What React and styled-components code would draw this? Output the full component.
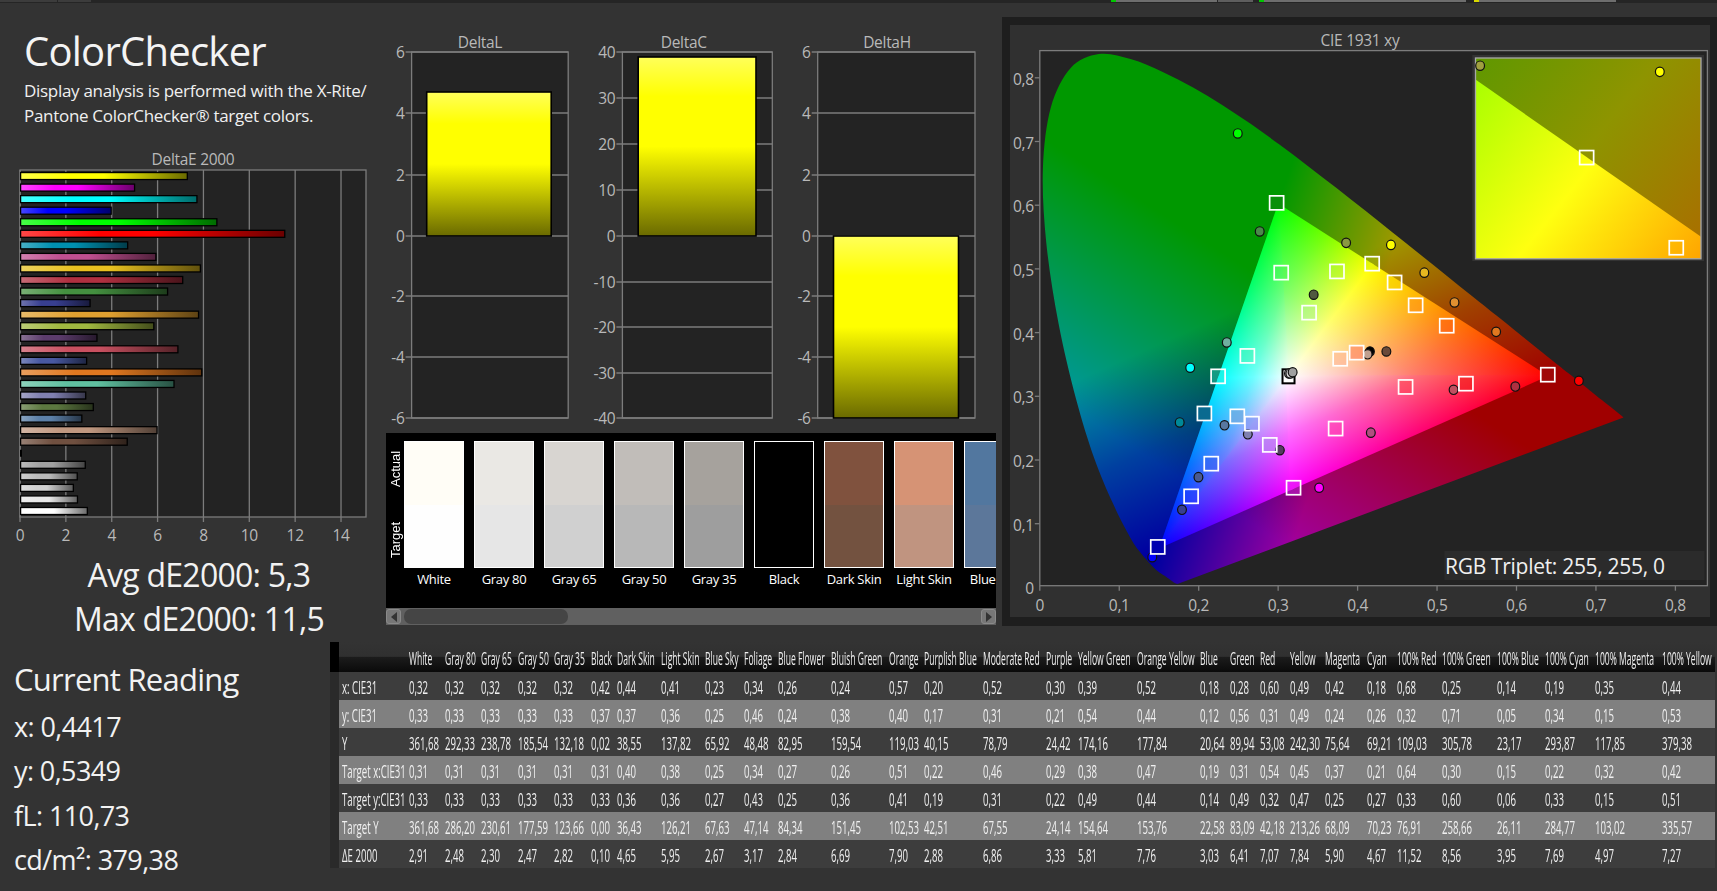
import React from 'react';
import styled, { createGlobalStyle } from 'styled-components';

const FONT = '"Open Sans", "Noto Sans", sans-serif';
const Global = createGlobalStyle`
  html, body { margin: 0; padding: 0; background: #333; }
  body { font-family: ${FONT}; }
`;

const Page = styled.div`
  width: 1717px; height: 891px; background: #333333; overflow: hidden;
  display: flex; flex-direction: column; color: #f2f2f2;
`;
const TopStrip = styled.div`
  height: 3px; background: #252525; display: flex; flex: none;
`;
const StripSeg = styled.div`
  height: 2px; width: ${p => p.$w}px; margin-left: ${p => p.$gap}px; background: ${p => p.$c}; flex: none;
`;
const TopRow = styled.div`
  display: flex; height: 637px; flex: none;
`;
const LeftCol = styled.div`
  width: 386px; flex: none; display: flex; flex-direction: column;
`;
const Title = styled.h1`
  margin: 23px 0 0 24px; font-size: 40px; font-weight: 400; line-height: 50px; letter-spacing: -0.75px; color: #f4f4f4;
`;
const Desc = styled.p`
  margin: 2px 0 20px 24px; font-size: 17px; line-height: 25px; letter-spacing: -0.3px; color: #f0f0f0; height: 50px; white-space: nowrap;
`;
const ChartSvg = styled.svg`
  display: block; flex: none;
`;
const Stats = styled.div`
  display: flex; flex-direction: column; align-items: flex-start;
`;
const Stat = styled.div`
  font-size: 32px; line-height: 44px; letter-spacing: -0.75px; color: #f2f2f2; white-space: nowrap; width: 398px; text-align: center;
`;
const MidCol = styled.div`
  width: 616px; flex: none; display: flex; flex-direction: column; padding-top: 25px;
`;
const DeltaRow = styled.div`
  display: flex; height: 405px; flex: none;
`;
const SwatchPanel = styled.div`
  width: 610px; height: 192px; display: flex; flex-direction: column; flex: none;
`;
const SwatchArea = styled.div`
  height: 175px; background: #000; display: flex; overflow: hidden; flex: none;
`;
const SideLabels = styled.div`
  width: 18px; flex: none; display: flex; flex-direction: column;
`;
const SideLabel = styled.div`
  height: 71px; display: flex; align-items: center; justify-content: center;
  writing-mode: vertical-rl; transform: rotate(180deg);
  font-size: 13px; font-weight: 400; color: #fff;
  font-family: "Liberation Sans", sans-serif;
`;
const Swatches = styled.div`
  display: flex; gap: 10px; padding-top: 8px;
`;
const SwatchItem = styled.div`
  width: 60px; flex: none; display: flex; flex-direction: column; align-items: center;
`;
const SwatchBox = styled.div`
  width: 60px; height: 127px; box-sizing: border-box; border: 1.5px solid #fff; display: flex; flex-direction: column; box-shadow: inset 0 0 0 1px rgba(0,0,0,.12);
`;
const SwatchHalf = styled.div`
  flex: 1; background: ${p => p.$c};
`;
const SwatchLabel = styled.div`
  font-size: 13px; line-height: 22px; color: #fff; white-space: nowrap; letter-spacing: -0.3px;
`;
const ScrollBar = styled.div`
  height: 17px; background: #606060; display: flex; align-items: center; justify-content: space-between; flex: none;
`;
const ScrollBtn = styled.div`
  width: 15px; height: 15px; box-sizing: border-box; background: #777; border: 1px solid #8a8a8a; border-radius: 3px; display: flex; align-items: center; justify-content: center; flex: none;
`;
const Arrow = styled.div`
  width: 0; height: 0; border-top: 5px solid transparent; border-bottom: 5px solid transparent;
  ${p => p.$dir === 'left' ? 'border-right: 6px solid #333;' : 'border-left: 6px solid #333;'}
`;
const Thumb = styled.div`
  width: 164px; height: 15px; background: #454545; border-radius: 7px; margin-left: 3px; margin-right: auto; flex: none;
`;
const RightCol = styled.div`
  width: 715px; flex: none; padding-top: 14px;
`;
const CieFrame = styled.div`
  width: 715px; height: 609px; box-sizing: border-box; background: #1e1e1e; padding: 8px 7px 9px 8px;
`;
const CieInner = styled.div`
  background: #303030; width: 700px; height: 592px;
`;
const BottomRow = styled.div`
  flex: 1; display: flex;
`;
const Reading = styled.div`
  width: 330px; flex: none; padding-left: 14px; box-sizing: border-box; white-space: nowrap;
`;
const ReadingTitle = styled.div`
  font-size: 31px; line-height: 44px; margin: 17px 0 4px; letter-spacing: -0.75px; color: #f2f2f2;
`;
const ReadingLine = styled.div`
  font-size: 27px; line-height: 44.4px; letter-spacing: -0.6px; color: #f2f2f2;
`;
const TableWrap = styled.div`
  width: 1385px; flex: none; margin-top: 2px;
`;

const STARTS = [330, 339, 409.3, 445, 481.3, 518, 554.3, 590.7, 617.3, 660.7, 704.7, 744, 778.3, 831.3, 888.7, 924, 982.7, 1046, 1078, 1136.7, 1200, 1230, 1260.3, 1290, 1325.3, 1367, 1396.7, 1442, 1497.3, 1545.3, 1595.3, 1661.7, 1715];
const COLS = STARTS.slice(1).map((s, i) => `${(s - STARTS[i]).toFixed(1)}px`).join(' ');

const HeadRow = styled.div`
  display: grid; grid-template-columns: ${COLS}; height: 30px; align-items: center;
  background: linear-gradient(#333 0, #303030 48%, #1c1c1c 50%, #0a0a0a 100%);
`;
const Corner = styled.div`
  height: 30px; background: #000;
`;
const DataRow = styled.div`
  display: grid; grid-template-columns: ${COLS}; height: 28px; align-items: center;
  background: ${p => p.$alt ? '#808080' : '#3d3d3d'};
`;
const RowGrip = styled.div`
  height: 28px; background: #2a2a2a;
`;
const Cell = styled.div`
  min-width: 0; height: 28px; line-height: 30px; padding-left: ${p => p.$pad || 0}px;
`;
const CellText = styled.span`
  display: inline-block; font-size: 17.5px; color: #f0f0f0; white-space: nowrap;
  transform: scaleX(${p => p.$sx || 0.55}); transform-origin: left center; width: 0;
`;

const AxisText = styled.text`
  font-family: ${FONT}; font-size: ${p => p.$size || 15.5}px; fill: #b9b9b9; letter-spacing: -0.3px;
`;

const NAMES = ['White','Gray 80','Gray 65','Gray 50','Gray 35','Black','Dark Skin','Light Skin','Blue Sky','Foliage','Blue Flower','Bluish Green','Orange','Purplish Blue','Moderate Red','Purple','Yellow Green','Orange Yellow','Blue','Green','Red','Yellow','Magenta','Cyan','100% Red','100% Green','100% Blue','100% Cyan','100% Magenta','100% Yellow'];
const ROWS = [
  ['x: CIE31', '0,32 0,32 0,32 0,32 0,32 0,42 0,44 0,41 0,23 0,34 0,26 0,24 0,57 0,20 0,52 0,30 0,39 0,52 0,18 0,28 0,60 0,49 0,42 0,18 0,68 0,25 0,14 0,19 0,35 0,44'],
  ['y: CIE31', '0,33 0,33 0,33 0,33 0,33 0,37 0,37 0,36 0,25 0,46 0,24 0,38 0,40 0,17 0,31 0,21 0,54 0,44 0,12 0,56 0,31 0,49 0,24 0,26 0,32 0,71 0,05 0,34 0,15 0,53'],
  ['Y', '361,68 292,33 238,78 185,54 132,18 0,02 38,55 137,82 65,92 48,48 82,95 159,54 119,03 40,15 78,79 24,42 174,16 177,84 20,64 89,94 53,08 242,30 75,64 69,21 109,03 305,78 23,17 293,87 117,85 379,38'],
  ['Target x:CIE31', '0,31 0,31 0,31 0,31 0,31 0,31 0,40 0,38 0,25 0,34 0,27 0,26 0,51 0,22 0,46 0,29 0,38 0,47 0,19 0,31 0,54 0,45 0,37 0,21 0,64 0,30 0,15 0,22 0,32 0,42'],
  ['Target y:CIE31', '0,33 0,33 0,33 0,33 0,33 0,33 0,36 0,36 0,27 0,43 0,25 0,36 0,41 0,19 0,31 0,22 0,49 0,44 0,14 0,49 0,32 0,47 0,25 0,27 0,33 0,60 0,06 0,33 0,15 0,51'],
  ['Target Y', '361,68 286,20 230,61 177,59 123,66 0,00 36,43 126,21 67,63 47,14 84,34 151,45 102,53 42,51 67,55 24,14 154,64 153,76 22,58 83,09 42,18 213,26 68,09 70,23 76,91 258,66 26,11 284,77 103,02 335,57'],
  ['ΔE 2000', '2,91 2,48 2,30 2,47 2,82 0,10 4,65 5,95 2,67 3,17 2,84 6,69 7,90 2,88 6,86 3,33 5,81 7,76 3,03 6,41 7,07 7,84 5,90 4,67 11,52 8,56 3,95 7,69 4,97 7,27'],
];
const BAR_COLORS = ['#ffffff','#e8e8e8','#d0d0d0','#bbbbbb','#a0a0a0','#000000','#705040','#c09880','#5c80a8','#5c7840','#8080b0','#60c0a0','#e07820','#4858a0','#c85060','#5c3c6c','#a0b840','#e0a030','#383f90','#449040','#b03040','#e8c020','#c04f90','#0090b0','#ff0000','#00ff00','#0000ff','#00ffff','#ff00ff','#ffff00'];
const DE = ROWS[6][1].split(' ').map(s => parseFloat(s.replace(',', '.')));

const hex = c => [1, 3, 5].map(i => parseInt(c.slice(i, i + 2), 16));
const mix = (c, t, k) => {
  const a = hex(c), b = hex(t);
  return `rgb(${a.map((v, i) => Math.round(v + (b[i] - v) * k)).join(',')})`;
};

const GRID = '#7c7c7c';

function DeltaEChart() {
  const x0 = 20, x1 = 366, y0 = 170, y1 = 517, u = 22.93;
  const ticks = [0, 2, 4, 6, 8, 10, 12, 14];
  return (
    <ChartSvg width="386" height="405" viewBox="0 148 386 405">
      <defs>
        {BAR_COLORS.map((c, i) => (
          <linearGradient key={i} id={`bar${i}`} x1="0" x2="1" y1="0" y2="0">
            <stop offset="0" stopColor={mix(c, '#ffffff', 0.28)} />
            <stop offset="0.3" stopColor={c} />
            <stop offset="0.5" stopColor={c} />
            <stop offset="1" stopColor={mix(c, '#000000', 0.58)} />
          </linearGradient>
        ))}
      </defs>
      <AxisText x="193" y="165" textAnchor="middle">DeltaE 2000</AxisText>
      <rect x={x0} y={y0} width={x1 - x0} height={y1 - y0} fill="#232323" stroke={GRID} strokeWidth="1.3" />
      {ticks.map(t => {
        const x = x0 + t * u;
        return (
          <g key={t}>
            <line x1={x} x2={x} y1={y0} y2={y1 + 5} stroke={GRID} strokeWidth="1.3" />
            <AxisText x={x} y="541" textAnchor="middle">{t}</AxisText>
          </g>
        );
      })}
      {BAR_COLORS.map((c, i) => {
        const cy = 511 - i * 11.55;
        if (i === 5) return <rect key={i} x={x0} y={cy - 3.5} width="2" height="7" fill="#000" />;
        return <rect key={i} x={x0 + 0.6} y={cy - 3.5} width={DE[i] * u} height="7" fill={`url(#bar${i})`} stroke="#000" strokeWidth="1.3" />;
      })}
    </ChartSvg>
  );
}

function DeltaChart({ id, left, width, title, titleX, px0, px1, ticks, bar }) {
  const y0 = 52, y1 = 418;
  return (
    <ChartSvg width={width} height="405" viewBox={`${left} 28 ${width} 405`}>
      <defs>
        <linearGradient id={id} x1="0" x2="0" y1="0" y2="1">
          <stop offset="0" stopColor="#ffff5a" />
          <stop offset="0.22" stopColor="#ffff00" />
          <stop offset="0.5" stopColor="#ffff00" />
          <stop offset="1" stopColor="#6a6a00" />
        </linearGradient>
      </defs>
      <AxisText x={titleX} y="48" textAnchor="middle">{title}</AxisText>
      <rect x={px0} y={y0} width={px1 - px0} height={y1 - y0} fill="#232323" stroke={GRID} strokeWidth="1.3" />
      {ticks.map(([label, y]) => (
        <g key={label}>
          <line x1={px0 - 6} x2={px1} y1={y} y2={y} stroke={GRID} strokeWidth="1.3" />
          <AxisText x={px0 - 7} y={y + 6} textAnchor="end">{label}</AxisText>
        </g>
      ))}
      <rect x={bar[0]} y={bar[2]} width={bar[1] - bar[0]} height={bar[3] - bar[2]} fill={`url(#${id})`} stroke="#000" strokeWidth="1.6" />
    </ChartSvg>
  );
}

const SW = [
  ['White', '#fffdf6', '#fefefe'], ['Gray 80', '#eae8e4', '#e6e6e6'], ['Gray 65', '#d8d5d1', '#d0d0d0'], ['Gray 50', '#c1bdb9', '#b8b8b8'],
  ['Gray 35', '#a6a29d', '#9e9e9e'], ['Black', '#000000', '#000000'], ['Dark Skin', '#80523e', '#735240'], ['Light Skin', '#d69375', '#c09480'], ['Blue Sky', '#52779f', '#5c779a'],
];

// CIE
const LOCUS = [[.1741,.005],[.1714,.0051],[.1644,.0109],[.1566,.0177],[.144,.0297],[.1241,.0578],[.1096,.0868],[.0913,.1327],[.0687,.2007],[.0454,.295],[.0235,.4127],[.0082,.5384],[.0039,.6548],[.0139,.7502],[.0389,.812],[.0743,.8338],[.1142,.8262],[.1547,.8059],[.1929,.7816],[.2296,.7543],[.2658,.7243],[.3016,.6923],[.3373,.6589],[.3731,.6245],[.4087,.5896],[.4441,.5547],[.4788,.5202],[.5125,.4866],[.5448,.4544],[.5752,.4242],[.6029,.3965],[.627,.3725],[.6482,.3514],[.6658,.334],[.6915,.3083],[.7079,.292],[.726,.274],[.7347,.2653]];
const X = x => 1039.8 + 794.5 * x;
const Y = y => 586.9 - 639 * y;
const YT = y => 587.4 - 637 * y;
const P = ([x, y]) => [X(x), Y(y)];
const R_ = P([.64, .33]), G_ = P([.30, .60]), B_ = P([.15, .06]), W_ = P([.3127, .329]);
const lerp = (a, b, t) => [a[0] + (b[0] - a[0]) * t, a[1] + (b[1] - a[1]) * t];
const Y_ = lerp(R_, G_, .65), C_ = lerp(G_, B_, .506), M_ = lerp(B_, R_, .344);
const splinePath = pts => {
  let d = `M${pts[0][0].toFixed(1)} ${pts[0][1].toFixed(1)}`;
  for (let i = 0; i < pts.length - 1; i++) {
    const p0 = pts[Math.max(0, i - 1)], p1 = pts[i], p2 = pts[i + 1], p3 = pts[Math.min(pts.length - 1, i + 2)];
    const c1 = [p1[0] + (p2[0] - p0[0]) / 6, p1[1] + (p2[1] - p0[1]) / 6];
    const c2 = [p2[0] - (p3[0] - p1[0]) / 6, p2[1] - (p3[1] - p1[1]) / 6];
    d += ` C${c1[0].toFixed(1)} ${c1[1].toFixed(1)} ${c2[0].toFixed(1)} ${c2[1].toFixed(1)} ${p2[0].toFixed(1)} ${p2[1].toFixed(1)}`;
  }
  return d + ' Z';
};
const LOCUS_D = splinePath(LOCUS.map(P));
const TRI_D = `M${R_[0]} ${R_[1]} L${G_[0]} ${G_[1]} L${B_[0]} ${B_[1]} Z`;
const gradVec = (a, b, v) => {
  const d = [b[0] - a[0], b[1] - a[1]];
  const t = ((v[0] - a[0]) * d[0] + (v[1] - a[1]) * d[1]) / (d[0] * d[0] + d[1] * d[1]);
  const f = [a[0] + d[0] * t, a[1] + d[1] * t];
  return { x1: f[0], y1: f[1], x2: v[0], y2: v[1] };
};
const VEC = { r: gradVec(G_, B_, R_), g: gradVec(R_, B_, G_), b: gradVec(R_, G_, B_) };
const zx = v => 1000 + v / 2.187;
const zy = v => v / 2.45;

const CIRCLES = [
  [520,327,'#00ff00'],[568,567,'#4a8a4a'],[757,595,'#8a9a40'],[855,600,'#ffff00'],[928,668,'#e8b820'],[994,741,'#e09030'],[1085,813,'#e07820'],
  [686,722,'#505a40'],[496,839,'#70b0a0'],[416,901,'#00ffff'],[393,1035,'#008898'],[491,1042,'#5878a0'],[542,1064,'#8080b0'],[612,1103,'#553a60'],
  [434,1169,'#4a5a90'],[398,1249,'#383f90'],[333,1365,'#0000ff'],[698,1195,'#ff00ff'],[811,1060,'#b04f80'],[992,955,'#c05060'],[1127,947,'#b03040'],
  [1266,933,'#ff0000'],[845,861,'#6a4a3a'],[809,861,'#000000'],[804,868,'#c0a090'],
];
const SQUARES = [
  [605,497,'#0a900a',1],[615,668,'#4cee5c',.3],[737,665,'#a4f03c',.3],[814,646,'#b8e010',.3],[863,692,'#f0c000',.3],[909,748,'#ff8a1c',.4],[977,798,'#ff5a14',.4],[676,766,'#a8f090',.4],
  [541,872,'#50f0b0',.4],[477,922,'#30e8d0',.4],[447,1013,'#0a6a90',1],[519,1020,'#70a8e0',.7],[551,1038,'#7a90f0',.5],[590,1090,'#b090f0',.5],[462,1136,'#3060f0',.5],[418,1216,'#2040ff',.5],
  [345,1340,'#0000b0',1],[642,1195,'#d030f0',.4],[734,1050,'#ff40a0',.4],[744,879,'#ffb090',.5],[780,864,'#ff8060',.6],[887,948,'#ff3040',.4],[1019,940,'#f01818',.5],[1198,918,'#a00808',1],
];
const GRAYDOTS = [[632,915,'#c0c0c0'],[635,915,'#d8d8d8'],[640,912,'#a0a0a0']];

function Dot({ x, y, c }) {
  return <ellipse cx={x} cy={y} rx="4.4" ry="4.7" fill={c} stroke="#111" strokeWidth="1.2" />;
}
function Sq({ x, y, c, o = 1 }) {
  return <rect x={x - 7} y={y - 7} width="14" height="14" fill={c} fillOpacity={o} stroke="#fff" strokeWidth="1.7" />;
}

const CH = { r: [1, 0, 0], g: [0, 1, 0], b: [0, 0, 1] };
const level = (k, peak, f) => `rgb(${CH[k].map(v => Math.round(v * peak * f)).join(',')})`;

function OuterGamut() {
  const peaks = { r: 160, g: 152, b: 160 };
  const ramps = { r: [[0, 0], [.4, 1]], g: [[0, 0], [.35, .42], [.7, 1]], b: [[.2, 0], [.8, 1]] };
  return (
    <g clipPath="url(#clipLocus)" style={{ isolation: 'isolate' }}>
      <defs>
        {['r', 'g', 'b'].map(k => (
          <linearGradient key={k} id={`out${k}`} gradientUnits="userSpaceOnUse" {...VEC[k]}>
            {ramps[k].map(([o, f]) => <stop key={o} offset={o} stopColor={level(k, peaks[k], f)} />)}
          </linearGradient>
        ))}
      </defs>
      <rect x="1030" y="50" width="680" height="540" fill="#000" />
      {['r', 'g', 'b'].map(k => (
        <rect key={k} x="1030" y="50" width="680" height="540" fill={`url(#out${k})`} style={{ mixBlendMode: 'screen' }} />
      ))}
    </g>
  );
}

// One wedge of the gamut triangle, fanned around the white point:
// full primary p, rising towards secondary point s (channel q), rising towards white (channel t)
const SECTORS = [
  { id: 'ry', p: R_, s: Y_, pc: 'r', q: 'g', t: 'b' },
  { id: 'gy', p: G_, s: Y_, pc: 'g', q: 'r', t: 'b' },
  { id: 'gc', p: G_, s: C_, pc: 'g', q: 'b', t: 'r' },
  { id: 'bc', p: B_, s: C_, pc: 'b', q: 'g', t: 'r' },
  { id: 'bm', p: B_, s: M_, pc: 'b', q: 'r', t: 'g' },
  { id: 'rm', p: R_, s: M_, pc: 'r', q: 'b', t: 'g' },
];
const grow = pts => {
  const c = [(pts[0][0] + pts[1][0] + pts[2][0]) / 3, (pts[0][1] + pts[1][1] + pts[2][1]) / 3];
  return pts.map(p => lerp(c, p, 1.03).map(v => v.toFixed(1)).join(',')).join(' ');
};
function Sector({ id, p, s, pc, q, t }) {
  return (
    <g clipPath={`url(#clip${id})`} style={{ isolation: 'isolate' }}>
      <defs>
        <clipPath id={`clip${id}`}><polygon points={grow([W_, p, s])} /></clipPath>
        <linearGradient id={`${id}q`} gradientUnits="userSpaceOnUse" {...gradVec(W_, s, p)}>
          <stop offset="0" stopColor={level(q, 255, 1)} />
          <stop offset="0.5" stopColor={level(q, 255, .46)} />
          <stop offset="1" stopColor="#000" />
        </linearGradient>
        <linearGradient id={`${id}t`} gradientUnits="userSpaceOnUse" {...gradVec(p, s, W_)}>
          <stop offset="0" stopColor="#000" />
          <stop offset="0.5" stopColor={level(t, 255, .42)} />
          <stop offset="1" stopColor={level(t, 255, 1)} />
        </linearGradient>
      </defs>
      <rect x="1100" y="150" width="500" height="420" fill={level(pc, 255, 1)} />
      <rect x="1100" y="150" width="500" height="420" fill={`url(#${id}q)`} style={{ mixBlendMode: 'screen' }} />
      <rect x="1100" y="150" width="500" height="420" fill={`url(#${id}t)`} style={{ mixBlendMode: 'screen' }} />
    </g>
  );
}

function CieChart() {
  const px0 = 1039.8, px1 = 1707.4, py0 = 50.6, py1 = 585.7;
  const inX = [1475.5, 1701], inY = [58, 258.8];
  return (
    <ChartSvg width="700" height="592" viewBox="1010 25 700 592">
      <defs>
        <clipPath id="clipLocus"><path d={LOCUS_D} /></clipPath>
        <clipPath id="clipTri"><path d={TRI_D} /></clipPath>
        <linearGradient id="inUp" gradientUnits="userSpaceOnUse" x1="1475" y1="58" x2="1701" y2="237">
          <stop offset="0" stopColor="#5f9800" /><stop offset="0.5" stopColor="#8e9400" /><stop offset="1" stopColor="#a87000" />
        </linearGradient>
        <linearGradient id="inLow" gradientUnits="userSpaceOnUse" x1="1475" y1="80" x2="1701" y2="258">
          <stop offset="0" stopColor="#a8ff00" /><stop offset="0.5" stopColor="#ffff10" /><stop offset="1" stopColor="#ffa500" />
        </linearGradient>
      </defs>
      <AxisText x="1360" y="46" textAnchor="middle">CIE 1931 xy</AxisText>
      <rect x={px0} y={py0} width={px1 - px0} height={py1 - py0} fill="#232323" stroke={GRID} strokeWidth="1.3" />
      {[1, 2, 3, 4, 5, 6, 7, 8].map(i => (
        <g key={i}>
          <line x1={px0 - 5} x2={px0} y1={YT(i / 10)} y2={YT(i / 10)} stroke={GRID} strokeWidth="1.3" />
          <AxisText x={px0 - 6} y={YT(i / 10) + 7} textAnchor="end">{`0,${i}`}</AxisText>
          <line x1={X(i / 10)} x2={X(i / 10)} y1={py1} y2={py1 + 5} stroke={GRID} strokeWidth="1.3" />
          <AxisText x={X(i / 10)} y="611" textAnchor="middle">{`0,${i}`}</AxisText>
        </g>
      ))}
      <AxisText x={px0 - 6} y={py1 + 8} textAnchor="end">0</AxisText>
      <line x1={px0} x2={px0} y1={py1} y2={py1 + 5} stroke={GRID} strokeWidth="1.3" />
      <AxisText x={px0} y="611" textAnchor="middle">0</AxisText>

      <OuterGamut />
      <g clipPath="url(#clipTri)">
        {SECTORS.map(s => <Sector key={s.id} {...s} />)}
      </g>

      <rect x={zx(631) - 6} y={zy(922) - 7} width="12" height="14" fill="#fff" stroke="#000" strokeWidth="2" />
      {GRAYDOTS.map(([x, y, c], i) => <Dot key={i} x={zx(x)} y={zy(y)} c={c} />)}
      {CIRCLES.map(([x, y, c], i) => <Dot key={i} x={zx(x)} y={zy(y)} c={c} />)}
      {SQUARES.map(([x, y, c, o], i) => <Sq key={i} x={zx(x)} y={zy(y)} c={c} o={o} />)}

      <rect x="1472.3" y="55" width="231.7" height="206" fill="#333" />
      <rect x={inX[0]} y={inY[0]} width={inX[1] - inX[0]} height={inY[1] - inY[0]} fill="url(#inLow)" />
      <polygon points="1475.5,58 1701,58 1701,236.7 1475.5,79.6" fill="url(#inUp)" />
      <rect x={inX[0]} y={inY[0]} width={inX[1] - inX[0]} height={inY[1] - inY[0]} fill="none" stroke="#a8a8a8" strokeWidth="1.3" />
      <Dot x={zx(1050)} y={zy(161)} c="#a0a040" />
      <Dot x={zx(1443)} y={zy(176)} c="#ffff00" />
      <Sq x={zx(1283)} y={zy(386)} c="none" />
      <Sq x={zx(1479)} y={zy(607)} c="none" />

      <rect x="1444.4" y="551" width="260" height="29" fill="#2b2b2b" />
      <AxisText x="1445" y="574" $size={21} style={{ fill: '#f0f0f0' }}>RGB Triplet: 255, 255, 0</AxisText>
    </ChartSvg>
  );
}

const LT = [['6', 52], ['4', 113], ['2', 175], ['0', 236], ['-2', 296], ['-4', 357], ['-6', 418]];
const CT = [['40', 52], ['30', 98], ['20', 144], ['10', 190], ['0', 236], ['-10', 282], ['-20', 327], ['-30', 373], ['-40', 418]];

export default function App() {
  return (
    <Page>
      <Global />
      <TopStrip>
        <StripSeg $gap={0} $w={57} $c="#3c3c3c" />
        <StripSeg $gap={1} $w={33} $c="#3c3c3c" />
        <StripSeg $gap={1020} $w={5} $c="#00c800" />
        <StripSeg $gap={0} $w={101} $c="#6e6e6e" />
        <StripSeg $gap={1} $w={35} $c="#5e5e5e" />
        <StripSeg $gap={6} $w={5} $c="#00c800" />
        <StripSeg $gap={0} $w={202} $c="#6e6e6e" />
        <StripSeg $gap={8} $w={5} $c="#d8d800" />
        <StripSeg $gap={0} $w={137} $c="#6e6e6e" />
      </TopStrip>
      <TopRow>
        <LeftCol>
          <Title>ColorChecker</Title>
          <Desc>Display analysis is performed with the X-Rite/<br />Pantone ColorChecker® target colors.</Desc>
          <DeltaEChart />
          <Stats>
            <Stat>Avg dE2000: 5,3</Stat>
            <Stat>Max dE2000: 11,5</Stat>
          </Stats>
        </LeftCol>
        <MidCol>
          <DeltaRow>
            <DeltaChart id="gl" left={386} width={190} title="DeltaL" titleX={480} px0={411.6} px1={568.2} ticks={LT} bar={[426.7, 551.2, 92, 236]} />
            <DeltaChart id="gc" left={576} width={206} title="DeltaC" titleX={683.7} px0={622.4} px1={772.3} ticks={CT} bar={[638.2, 756, 57, 236]} />
            <DeltaChart id="gh" left={782} width={204} title="DeltaH" titleX={887} px0={817.7} px1={975} ticks={LT} bar={[833.5, 958.5, 236, 418]} />
          </DeltaRow>
          <SwatchPanel>
            <SwatchArea>
              <SideLabels>
                <SideLabel>Actual</SideLabel>
                <SideLabel>Target</SideLabel>
              </SideLabels>
              <Swatches>
                {SW.map(([n, a, t]) => (
                  <SwatchItem key={n}>
                    <SwatchBox><SwatchHalf $c={a} /><SwatchHalf $c={t} /></SwatchBox>
                    <SwatchLabel>{n}</SwatchLabel>
                  </SwatchItem>
                ))}
              </Swatches>
            </SwatchArea>
            <ScrollBar>
              <ScrollBtn><Arrow $dir="left" /></ScrollBtn>
              <Thumb />
              <ScrollBtn><Arrow $dir="right" /></ScrollBtn>
            </ScrollBar>
          </SwatchPanel>
        </MidCol>
        <RightCol>
          <CieFrame>
            <CieInner><CieChart /></CieInner>
          </CieFrame>
        </RightCol>
      </TopRow>
      <BottomRow>
        <Reading>
          <ReadingTitle>Current Reading</ReadingTitle>
          <ReadingLine>x: 0,4417</ReadingLine>
          <ReadingLine>y: 0,5349</ReadingLine>
          <ReadingLine>fL: 110,73</ReadingLine>
          <ReadingLine>cd/m²: 379,38</ReadingLine>
        </Reading>
        <TableWrap>
          <HeadRow>
            <Corner />
            <Cell />
            {NAMES.map(n => <Cell key={n}><CellText $sx={0.49}>{n}</CellText></Cell>)}
          </HeadRow>
          {ROWS.map(([label, vals], r) => (
            <DataRow key={label} $alt={r % 2 === 1}>
              <RowGrip />
              <Cell $pad={2.7}><CellText>{label}</CellText></Cell>
              {vals.split(' ').map((v, i) => <Cell key={i}><CellText>{v}</CellText></Cell>)}
            </DataRow>
          ))}
        </TableWrap>
      </BottomRow>
    </Page>
  );
}
